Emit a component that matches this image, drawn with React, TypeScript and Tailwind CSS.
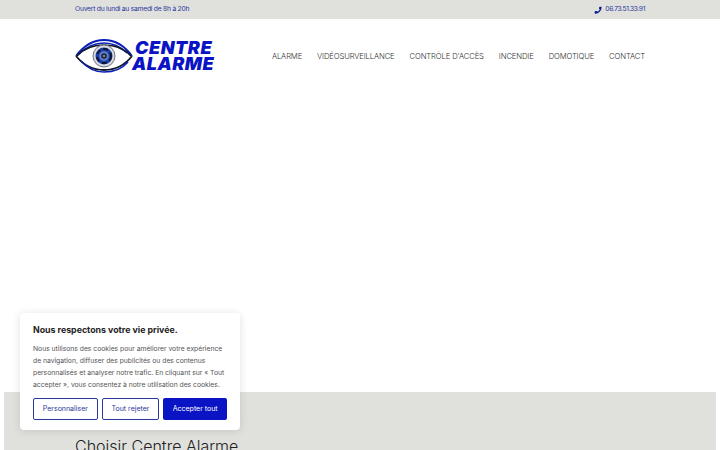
import React from "react";

function Eye() {
  return (
    <svg width="58" height="34" viewBox="0 0 58 34" className="shrink-0">
      <path d="M1 17 C10 5 20 1 29 1 C39 1 49 6 57 17" fill="none" stroke="#0a1fb8" strokeWidth="1.8" />
      <path d="M4 15 C12 7 20 4 29 4 C38 4 46 8 52 14" fill="none" stroke="#0a1fb8" strokeWidth="1.4" />
      <path d="M1 17 C10 28 20 31 29 31 C40 31 50 26 57 17" fill="none" stroke="#111827" strokeWidth="1.8" />
      <path d="M2 17 C10 8 20 6 29 6 C38 6 49 9 56 17" fill="none" stroke="#111827" strokeWidth="1.6" />
      <path d="M6 22 C14 31 22 33 29 33 C38 33 47 30 53 23" fill="none" stroke="#0a1fb8" strokeWidth="1.6" />
      <circle cx="29" cy="17" r="11" fill="#d9dbe0" stroke="#6b7280" strokeWidth="1" />
      <circle cx="29" cy="17" r="8.500" fill="#1c3fae" />
      <circle cx="29" cy="17" r="7" fill="none" stroke="#0f172a" strokeWidth="2" strokeDasharray="5 3" />
      <circle cx="29" cy="17" r="4.800" fill="#5f7bc9" />
      <circle cx="29" cy="17" r="2.800" fill="#1f2937" />
      <circle cx="29" cy="17" r="1" fill="#94a3b8" />
    </svg>
  );
}

export default function App() {
  const nav = ["ALARME", "VIDÉOSURVEILLANCE", "CONTRÔLE D'ACCÈS", "INCENDIE", "DOMOTIQUE", "CONTACT"];
  return (
    <div className="relative h-[450px] w-[720px] overflow-hidden bg-white font-['Inter',sans-serif]">
      <div className="flex h-[19px] items-center justify-between bg-[#e0e1dd] px-[75px] text-[6.75px] tracking-[-0.25px] text-[#2a379c]">
        <span>Ouvert du lundi au samedi de 8h à 20h</span>
        <span className="flex items-center gap-[3px] tracking-[-0.4px]">
          <svg width="8" height="8" viewBox="0 0 24 24" fill="#0a1a8c">
            <path d="M22 16.9v4a2 2 0 0 1-2.2 2A20 20 0 0 1 1.1 4.200 2 2 0 0 1 3.100 2h4a1 1 0 0 1 1 .8l1 4.500a1 1 0 0 1-.3 1L6.600 10.500a16 16 0 0 0 6.900 6.900l2.200-2.200a1 1 0 0 1 1-.3l4.500 1a1 1 0 0 1 .8 1z" transform="matrix(-1 0 0 1 24 0)" />
          </svg>
          06.73.51.33.91
        </span>
      </div>
      <header className="flex h-[74px] items-center justify-between px-[75px]">
        <div className="flex items-center">
          <Eye />
          <div className="ml-[-1px] text-[18px] font-black italic leading-[16px] tracking-[0.5px] text-[#0a14c4]">
            <div className="pl-[3px]">CENTRE</div>
            <div>ALARME</div>
          </div>
        </div>
        <nav className="flex gap-[15px] pt-[1px] text-[7.700px] font-light tracking-[-0.15px] text-[#333]">
          {nav.map((n) => (
            <span key={n}>{n}</span>
          ))}
        </nav>
      </header>
      <div className="h-[299px]" />
      <section className="mx-1 h-[100px] bg-[#e0e1dd] px-[71px] pt-[44px]">
        <h2 className="text-[16px] font-light leading-[20px] text-[#222]">Choisir Centre Alarme</h2>
      </section>
      <div className="absolute left-[20px] top-[313px] h-[117px] w-[220px] rounded-[4px] bg-white px-[13px] pt-[11px] shadow-[0_1px_8px_rgba(0,0,0,0.12)]">
        <h3 className="text-[8.800px] font-bold leading-[12px] text-[#222]">Nous respectons votre vie privée.</h3>
        <p className="mt-[6.500px] text-[6.800px] leading-[12px] tracking-[-0.02px] text-[#555]">
          Nous utilisons des cookies pour améliorer votre expérience de navigation, diffuser des publicités ou des contenus personnalisés et analyser notre trafic. En cliquant sur « Tout accepter », vous consentez à notre utilisation des cookies.
        </p>
        <div className="mt-[7.500px] flex gap-[4px] text-[7px]">
          <button className="h-[22px] w-[65px] rounded-[2px] border-[1.5px] border-[#2a379c] text-[#2a379c]">Personnaliser</button>
          <button className="h-[22px] w-[58px] rounded-[2px] border-[1.5px] border-[#2a379c] text-[#2a379c]">Tout rejeter</button>
          <button className="h-[22px] w-[64px] rounded-[2px] bg-[#0a14c4] text-white">Accepter tout</button>
        </div>
      </div>
    </div>
  );
}
